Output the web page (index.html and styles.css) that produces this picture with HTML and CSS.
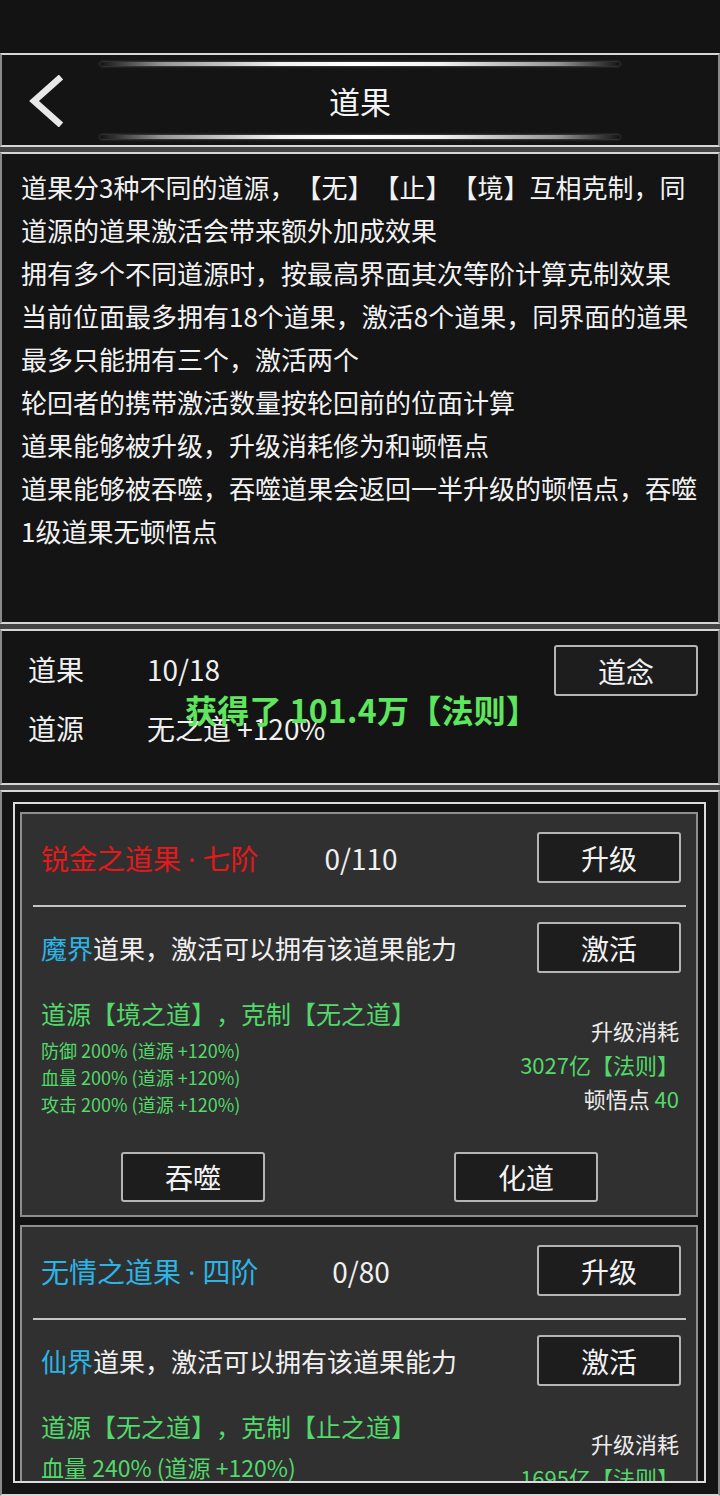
FILE: index.html
```html
<!DOCTYPE html>
<html lang="zh">
<head>
<meta charset="utf-8">
<title>道果</title>
<link rel="stylesheet" href="styles.css">
</head>
<body>
<div class="status"></div>
<div class="panels">
  <section class="panel header">
    <div class="glow"></div>
    <div class="header-row">
      <svg class="back" width="38" height="52" viewBox="0 0 38 52"><polyline points="33,2 6,26 33,50" fill="none" stroke="#e8e8e8" stroke-width="6.5" stroke-linejoin="miter"/></svg>
      <h1 class="title">道果</h1>
      <span></span>
    </div>
    <div class="glow"></div>
  </section>

  <section class="panel desc">
    <p class="desc-text">道果分3种不同的道源，【无】【止】【境】互相克制，同<br>道源的道果激活会带来额外加成效果<br>拥有多个不同道源时，按最高界面其次等阶计算克制效果<br>当前位面最多拥有18个道果，激活8个道果，同界面的道果<br>最多只能拥有三个，激活两个<br>轮回者的携带激活数量按轮回前的位面计算<br>道果能够被升级，升级消耗修为和顿悟点<br>道果能够被吞噬，吞噬道果会返回一半升级的顿悟点，吞噬<br>1级道果无顿悟点</p>
  </section>

  <section class="panel stats">
    <div class="stat-list">
      <div class="stat-row"><span class="stat-label">道果</span><span class="stat-value">10/18</span></div>
      <div class="stat-row"><span class="stat-label">道源</span><span class="stat-value">无之道 +120%</span></div>
    </div>
    <button class="btn">道念</button>
    <div class="toast">获得了 101.4万【法则】</div>
  </section>

  <section class="panel list">
    <div class="frame">
      <div class="card">
        <div class="card-head">
          <span class="card-title red">锐金之道果<span class="dot">·</span>七阶</span>
          <span class="card-count">0/110</span>
          <button class="btn head-btn">升级</button>
        </div>
        <div class="divider"></div>
        <div class="card-row">
          <span class="realm"><span class="cyan">魔界</span>道果，激活可以拥有该道果能力</span>
          <button class="btn">激活</button>
        </div>
        <div class="detail">
          <div class="detail-left">
            <div class="source">道源【境之道】，克制【无之道】</div>
            <div class="attrs">
              <div>防御 200% (道源 +120%)</div>
              <div>血量 200% (道源 +120%)</div>
              <div>攻击 200% (道源 +120%)</div>
            </div>
          </div>
          <div class="cost">
            <div>升级消耗</div>
            <div class="green">3027亿【法则】</div>
            <div>顿悟点 <span class="green">40</span></div>
          </div>
        </div>
        <div class="actions">
          <button class="btn">吞噬</button>
          <button class="btn">化道</button>
        </div>
      </div>

      <div class="card">
        <div class="card-head">
          <span class="card-title cyan">无情之道果<span class="dot">·</span>四阶</span>
          <span class="card-count">0/80</span>
          <button class="btn head-btn">升级</button>
        </div>
        <div class="divider"></div>
        <div class="card-row">
          <span class="realm"><span class="cyan">仙界</span>道果，激活可以拥有该道果能力</span>
          <button class="btn">激活</button>
        </div>
        <div class="detail">
          <div class="detail-left">
            <div class="source">道源【无之道】，克制【止之道】</div>
            <div class="attrs attrs-big">
              <div>血量 240% (道源 +120%)</div>
            </div>
          </div>
          <div class="cost">
            <div>升级消耗</div>
            <div class="green">1695亿【法则】</div>
            <div>顿悟点 <span class="green">20</span></div>
          </div>
        </div>
        <div class="actions">
          <button class="btn">吞噬</button>
          <button class="btn">化道</button>
        </div>
      </div>
    </div>
  </section>
</div>
</body>
</html>
```

FILE: styles.css
```css
* { box-sizing: border-box; }

html, body {
  margin: 0;
  padding: 0;
}

body {
  width: 720px;
  height: 1496px;
  overflow: hidden;
  background: #131313;
  color: #f0f0f0;
  font-family: "Noto Sans CJK SC", "Noto Sans", sans-serif;
  text-spacing-trim: space-all;
}

.status {
  height: 53px;
  background: #131313;
}

.panels {
  display: flex;
  flex-direction: column;
  gap: 5px;
  background: #444444;
}

.panel {
  background: #141414;
  border-top: 2px solid #d6d6d6;
  border-bottom: 2px solid #d6d6d6;
  border-left: 2px solid #8a8a8a;
  border-right: 2px solid #8a8a8a;
}

/* header */
.header {
  height: 94px;
  padding-top: 7px;
  display: flex;
  flex-direction: column;
}

.glow {
  width: 520px;
  height: 4px;
  margin: 0 auto;
  border-radius: 2px;
  background: linear-gradient(90deg, rgba(255,255,255,0) 0%, rgba(255,255,255,0.55) 12%, rgba(255,255,255,0.95) 35%, #ffffff 50%, rgba(255,255,255,0.95) 65%, rgba(255,255,255,0.55) 88%, rgba(255,255,255,0) 100%);
  box-shadow: 0 0 3px rgba(255,255,255,0.35);
}

.header-row {
  height: 69px;
  display: grid;
  grid-template-columns: 1fr auto 1fr;
  align-items: center;
}

.back {
  display: block;
  margin-left: 26px;
}

.title {
  margin: 0;
  font-size: 31px;
  font-weight: 400;
  line-height: 40px;
  color: #f4f4f4;
}

/* description */
.desc {
  height: 472px;
  padding: 11px 0 0 19px;
}

.desc-text {
  margin: 0;
  font-size: 26px;
  line-height: 43px;
  white-space: nowrap;
  color: #f2f2f2;
}

/* stats */
.stats {
  position: relative;
  height: 156px;
  padding: 8px 20px 0 26px;
  display: flex;
  justify-content: space-between;
  align-items: flex-start;
}

.stat-row {
  height: 59px;
  display: flex;
  align-items: center;
  font-size: 28px;
}

.stat-label {
  width: 119px;
}

.stats .btn {
  margin-top: 6px;
}

.toast {
  position: absolute;
  left: 183px;
  top: 60px;
  font-size: 32px;
  line-height: 36px;
  font-weight: 700;
  letter-spacing: 0.3px;
  color: #5ee65e;
  white-space: nowrap;
}

/* buttons */
.btn {
  width: 144px;
  height: 51px;
  padding: 0;
  background: #1d1d1d;
  border: 2px solid #b4b4b4;
  border-radius: 3px;
  color: #f2f2f2;
  font-family: "Noto Sans CJK SC", "Noto Sans", sans-serif;
  font-size: 28px;
  line-height: 1;
}

/* list */
.list {
  height: 706px;
  padding: 10px 12px 11px 11px;
}

.frame {
  height: 681px;
  overflow: hidden;
  border: 2px solid #dcdcdc;
  background: #121212;
  padding: 8px 6px 0 5px;
  display: flex;
  flex-direction: column;
  gap: 8px;
}

.card {
  flex-shrink: 0;
  background: #303030;
  border: 2px solid #8e8e8e;
  padding: 18px 15px 13px 19px;
}

.card-head {
  display: grid;
  grid-template-columns: 1fr auto 1fr;
  align-items: center;
}

.card-title {
  font-size: 28px;
  white-space: nowrap;
}

.dot {
  font-family: "Noto Sans", sans-serif;
  padding: 0 7px;
}

.card-count {
  font-size: 28px;
  color: #f0f0f0;
}

.head-btn {
  justify-self: end;
}

.red { color: #e3191b; }
.cyan { color: #2cb4e6; }
.green { color: #52d96a; }

.divider {
  height: 2px;
  background: #c4c4c4;
  margin: 22px -5px 15px -8px;
}

.card-row {
  display: flex;
  justify-content: space-between;
  align-items: center;
}

.realm {
  font-size: 26px;
  white-space: nowrap;
}

.detail {
  margin-top: 22px;
  display: flex;
  justify-content: space-between;
  align-items: flex-start;
}

.source {
  font-size: 25px;
  line-height: 36px;
  color: #52d96a;
  white-space: nowrap;
}

.attrs {
  margin-top: 6px;
  font-size: 18px;
  line-height: 27px;
  color: #52d96a;
  white-space: nowrap;
}

.attrs-big {
  font-size: 23px;
  line-height: 34px;
}

.cost {
  margin-top: 18px;
  margin-right: 2px;
  text-align: right;
  font-size: 22px;
  line-height: 34px;
  color: #ececec;
  white-space: nowrap;
}

.actions {
  margin-top: 34px;
  display: flex;
  justify-content: space-between;
  padding: 0 83px 0 80px;
}

.actions .btn {
  height: 50px;
}
```
